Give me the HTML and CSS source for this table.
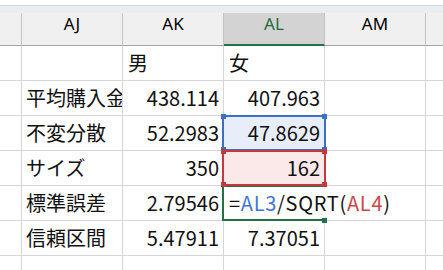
FILE: index.html
```html
<!DOCTYPE html>
<html lang="ja">
<head>
<meta charset="utf-8">
<link rel="stylesheet" href="styles.css">
</head>
<body>
<div class="sheet">
  <div class="topline"></div>
  <div class="band"></div>
  <div class="grid">
    <div class="hd"></div>
    <div class="hd">AJ</div>
    <div class="hd">AK</div>
    <div class="hd hd-sel">AL</div>
    <div class="hd">AM</div>
    <div class="hd hd-end"></div>

    <div class="c"></div>
    <div class="c"></div>
    <div class="c">男</div>
    <div class="c">女</div>
    <div class="c"></div>
    <div class="c end"></div>

    <div class="c"></div>
    <div class="c label">平均購入金額</div>
    <div class="c num">438.114</div>
    <div class="c num">407.963</div>
    <div class="c"></div>
    <div class="c end"></div>

    <div class="c"></div>
    <div class="c label">不変分散</div>
    <div class="c num">52.2983</div>
    <div class="c num ref-blue">47.8629<span class="box box-blue"><i class="h tl"></i><i class="h tr"></i><i class="h bl"></i><i class="h br"></i></span></div>
    <div class="c"></div>
    <div class="c end"></div>

    <div class="c"></div>
    <div class="c label">サイズ</div>
    <div class="c num">350</div>
    <div class="c num ref-red">162<span class="box box-red"><i class="h tl"></i><i class="h tr"></i><i class="h bl"></i><i class="h br"></i></span></div>
    <div class="c"></div>
    <div class="c end"></div>

    <div class="c"></div>
    <div class="c label">標準誤差</div>
    <div class="c num">2.79546</div>
    <div class="c active"><span class="formula">=<span class="f-blue">AL3</span>/SQRT(<span class="f-red">AL4</span>)</span><span class="box box-green"><i class="h br"></i></span></div>
    <div class="c under"></div>
    <div class="c end"></div>

    <div class="c"></div>
    <div class="c label">信頼区間</div>
    <div class="c num">5.47911</div>
    <div class="c num">7.37051</div>
    <div class="c"></div>
    <div class="c end"></div>

    <div class="c"></div>
    <div class="c"></div>
    <div class="c"></div>
    <div class="c"></div>
    <div class="c"></div>
    <div class="c end"></div>
  </div>
</div>
</body>
</html>
```

FILE: styles.css
```css
html, body {
  margin: 0;
  padding: 0;
  background: #ffffff;
}

.sheet {
  width: 443px;
  height: 270px;
  overflow: hidden;
  font-family: "Noto Sans CJK JP", "Noto Sans", sans-serif;
  color: #111;
}

.topline {
  height: 5px;
  border-bottom: 1px solid #d6d6d6;
  background: #fff;
}

.band {
  height: 7px;
  background: #e7edf0;
}

.grid {
  display: grid;
  grid-template-columns: 22px 101px 101px 101px 101px 17px;
  grid-template-rows: 33px repeat(7, 35px);
}

.hd {
  box-sizing: border-box;
  background: #f0f0f0;
  border-right: 1px solid #c4c4c4;
  border-bottom: 1px solid #a4a4a4;
  font-family: "Noto Sans", "Open Sans", sans-serif;
  font-size: 17px;
  line-height: 22px;
  text-align: center;
  color: #000;
}

.hd-sel {
  background: #d3d3d3;
  color: #1e6b40;
  border-bottom: 2px solid #217346;
}

.hd-end {
  border-right: none;
}

.c {
  position: relative;
  box-sizing: border-box;
  border-right: 1px solid #d6d6d6;
  border-bottom: 1px solid #d6d6d6;
  font-size: 20px;
  line-height: 34px;
  padding: 0 4px 0 5px;
  white-space: nowrap;
  overflow: hidden;
}

.end {
  border-right: none;
}

.label {
  padding-left: 4px;
}

.num {
  text-align: right;
}

.ref-blue {
  background: #e8eef9;
  overflow: visible;
}

.ref-red {
  background: #fbe8e8;
  overflow: visible;
}

.active {
  overflow: visible;
  border-right-color: #fff;
  z-index: 2;
}

.under {
  overflow: visible;
}

.formula {
  position: relative;
  z-index: 2;
  background: #fff;
  padding-right: 20px;
  letter-spacing: 0.7px;
}

.f-blue {
  color: #3f76d6;
}

.f-red {
  color: #cc4848;
}

.box {
  position: absolute;
  top: -1px;
  left: -2px;
  right: -2px;
  bottom: -1px;
  border: 2px solid;
  pointer-events: none;
}

.box-blue {
  border-color: #3e6fc7;
  z-index: 1;
}

.box-red {
  border-color: #c23a3e;
  z-index: 4;
}

.box-green {
  border-color: #217346;
  border-right: none;
  right: 0;
  z-index: 3;
}

.h {
  position: absolute;
  width: 5px;
  height: 5px;
}

.box-blue .h { background: #3e6fc7; }
.box-red .h { background: #c23a3e; }
.box-green .h { background: #217346; }

.tl { top: -3px; left: -3px; }
.tr { top: -3px; right: -3px; }
.bl { bottom: -3px; left: -3px; }
.br { bottom: -3px; right: -3px; }

.box-green .br { right: -3px; bottom: -4px; }
```
